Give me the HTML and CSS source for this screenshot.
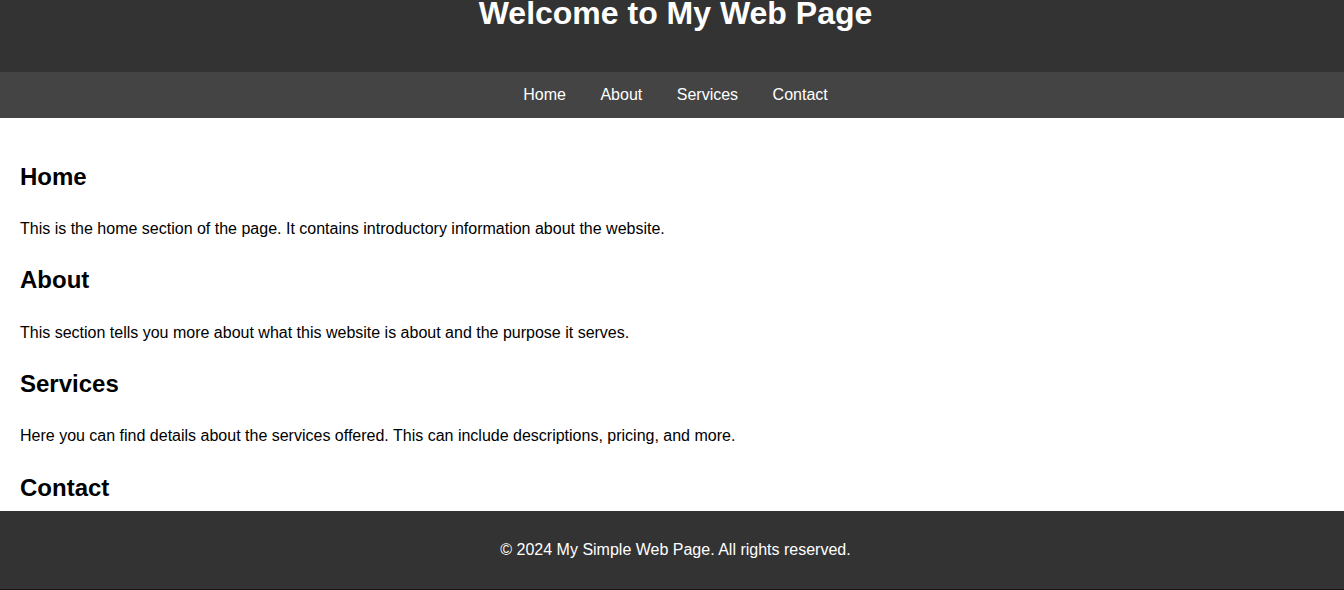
FILE: index.html
```html
<!DOCTYPE html>
<html lang="en">
<head>
<meta charset="utf-8">
<title>My Simple Web Page</title>
<link rel="stylesheet" href="styles.css">
</head>
<body>
<header class="site-header">
  <h1 class="site-title">Welcome to My Web Page</h1>
</header>
<nav class="site-nav">
  <ul class="nav-list">
    <li><a href="#home">Home</a></li>
    <li><a href="#about">About</a></li>
    <li><a href="#services">Services</a></li>
    <li><a href="#contact">Contact</a></li>
  </ul>
</nav>
<main class="content">
  <section id="home" class="section">
    <h2>Home</h2>
    <p>This is the home section of the page. It contains introductory information about the website.</p>
  </section>
  <section id="about" class="section">
    <h2>About</h2>
    <p>This section tells you more about what this website is about and the purpose it serves.</p>
  </section>
  <section id="services" class="section">
    <h2>Services</h2>
    <p>Here you can find details about the services offered. This can include descriptions, pricing, and more.</p>
  </section>
  <section id="contact" class="section">
    <h2>Contact</h2>
    <p>Feel free to reach out to us via email or phone for any inquiries.</p>
  </section>
</main>
<footer class="site-footer">
  <p>&copy; 2024 My Simple Web Page. All rights reserved.</p>
</footer>
</body>
</html>
```

FILE: styles.css
```css
html, body {
  margin: 0;
  padding: 0;
}

body {
  font-family: "Liberation Sans", Arial, sans-serif;
  line-height: 1.6;
  color: #000;
  background: #fff;
}

.site-header {
  background: #333;
  color: #fff;
  text-align: center;
  height: 72px;
  overflow: hidden;
}

.site-title {
  margin: -12px 0 0;
  font-size: 32px;
  padding-left: 7px;
}

.site-nav {
  background: #444;
  padding: 10px 0;
}

.nav-list {
  list-style: none;
  margin: 0;
  padding: 0 0 0 7px;
  display: flex;
  justify-content: center;
  gap: 34.5px;
}

.nav-list a {
  color: #fff;
  text-decoration: none;
  font-size: 16px;
}

.content {
  padding: 20px;
}

.section h2 {
  font-size: 24px;
  margin: 19.92px 0;
}

.section p {
  font-size: 16px;
  margin: 16px 0;
}

.site-footer {
  position: fixed;
  left: 0;
  right: 0;
  bottom: 0;
  background: #333;
  color: #fff;
  text-align: center;
  padding: 10px 0 10px 7px;
  border-bottom: 1px solid #161616;
}

.site-footer p {
  margin: 16px 0;
}
```
